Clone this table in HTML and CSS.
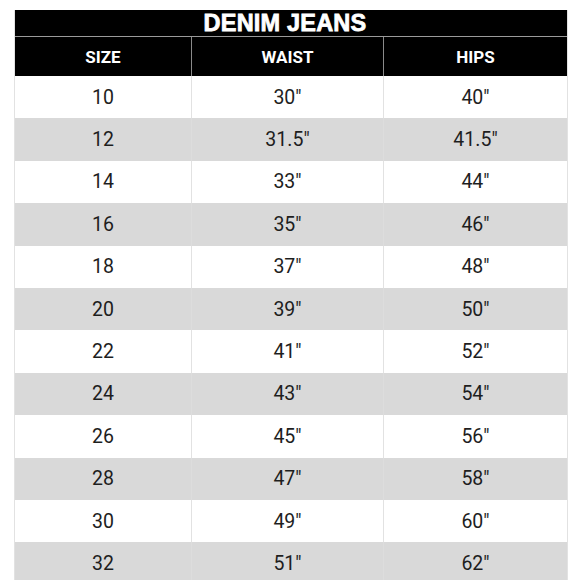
FILE: index.html
```
<!DOCTYPE html>
<html>
<head>
<meta charset="utf-8">
<link rel="stylesheet" href="styles.css">
</head>
<body>
<div class="chart">
  <div class="title">DENIM JEANS</div>
  <div class="grid">
    <div class="hd">SIZE</div><div class="hd">WAIST</div><div class="hd">HIPS</div>
    <div class="c">10</div><div class="c">30"</div><div class="c">40"</div>
    <div class="c g">12</div><div class="c g">31.5"</div><div class="c g">41.5"</div>
    <div class="c">14</div><div class="c">33"</div><div class="c">44"</div>
    <div class="c g">16</div><div class="c g">35"</div><div class="c g">46"</div>
    <div class="c">18</div><div class="c">37"</div><div class="c">48"</div>
    <div class="c g">20</div><div class="c g">39"</div><div class="c g">50"</div>
    <div class="c">22</div><div class="c">41"</div><div class="c">52"</div>
    <div class="c g">24</div><div class="c g">43"</div><div class="c g">54"</div>
    <div class="c">26</div><div class="c">45"</div><div class="c">56"</div>
    <div class="c g">28</div><div class="c g">47"</div><div class="c g">58"</div>
    <div class="c">30</div><div class="c">49"</div><div class="c">60"</div>
    <div class="c g">32</div><div class="c g">51"</div><div class="c g">62"</div>
  </div>
</div>
</body>
</html>
```
FILE: styles.css
```
html, body {
  margin: 0;
  padding: 0;
  background: #fff;
  overflow: hidden;
}
.chart {
  margin: 10px 0 0 14px;
  width: 552px;
  border-left: 1px solid #e2e2e2;
  border-right: 1px solid #e2e2e2;
  font-family: Roboto, "Liberation Sans", sans-serif;
}
.title {
  height: 26px;
  background: #000;
  color: #fff;
  font-family: "Liberation Sans", Arial, sans-serif;
  font-weight: 700;
  font-size: 23.5px;
  line-height: 26px;
  text-align: center;
  letter-spacing: 0.2px;
  -webkit-text-stroke: 0.8px #fff;
  border-bottom: 1px solid #9a9a9a;
  padding-right: 12px;
}
.grid {
  display: grid;
  grid-template-columns: 176px 192px 1fr;
  grid-template-rows: 39px;
  grid-auto-rows: 42.4px;
}
.hd {
  background: #000;
  color: #fff;
  font-weight: 700;
  font-size: 17px;
  display: flex;
  align-items: center;
  justify-content: center;
  border-left: 1px solid #8a8a8a;
}
.hd:first-child {
  border-left: none;
}
.c {
  display: flex;
  align-items: center;
  justify-content: center;
  font-size: 19.5px;
  color: #1e1e1e;
  background: #fff;
  border-left: 1px solid #e2e2e2;
}
.c:nth-child(3n+1) {
  border-left: none;
}
.c.g {
  background: #d9d9d9;
  border-left-color: #dddddd;
}
```
